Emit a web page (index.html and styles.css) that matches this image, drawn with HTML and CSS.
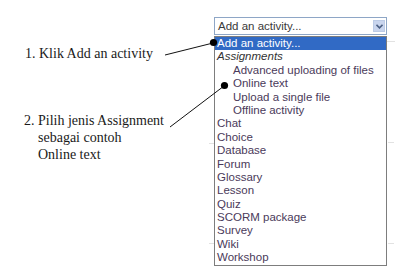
FILE: index.html
```html
<!DOCTYPE html>
<html lang="en">
<head>
    <meta charset="UTF-8">
    <title>Add an activity</title>
    <link rel="stylesheet" href="styles.css">
</head>
<body>
<div class="page">
    <div class="notes">
        <p class="note note-first">1. Klik Add an activity</p>
        <p class="note note-second">2. Pilih jenis Assignment<br><span class="indent">sebagai contoh</span><br><span class="indent">Online text</span></p>
    </div>

    <div class="activity">
        <div class="select-box">
            <span class="select-text">Add an activity...</span>
            <span class="arrow">
                <svg width="7" height="5" viewBox="0 0 7 5"><path d="M0.5 0.8 L3.5 3.8 L6.5 0.8" fill="none" stroke="#4d6185" stroke-width="1.6"/></svg>
            </span>
        </div>
        <ul class="options">
            <li class="selected">Add an activity...</li>
            <li class="group">Assignments</li>
            <li class="sub">Advanced uploading of files</li>
            <li class="sub">Online text</li>
            <li class="sub">Upload a single file</li>
            <li class="sub">Offline activity</li>
            <li>Chat</li>
            <li>Choice</li>
            <li>Database</li>
            <li>Forum</li>
            <li>Glossary</li>
            <li>Lesson</li>
            <li>Quiz</li>
            <li>SCORM package</li>
            <li>Survey</li>
            <li>Wiki</li>
            <li>Workshop</li>
        </ul>
    </div>
</div>

<!-- pointer lines from the notes to the list -->
<svg class="pointers" width="400" height="274" viewBox="0 0 400 274">
    <g stroke="#e2e2e2" stroke-width="1">
        <line x1="387" y1="41.5" x2="395" y2="41.5"/>
        <line x1="388" y1="142.5" x2="394" y2="142.5"/>
        <line x1="209" y1="143.5" x2="214" y2="143.5"/>
        <line x1="388" y1="243.5" x2="394" y2="243.5"/>
        <line x1="209" y1="243.5" x2="214" y2="243.5"/>
    </g>
    <g stroke="#111" stroke-width="1">
        <line x1="165" y1="55" x2="213" y2="43"/>
        <line x1="170" y1="127" x2="224" y2="86"/>
    </g>
    <circle cx="213.5" cy="42.5" r="3.6" fill="#000"/>
    <circle cx="224.5" cy="85.5" r="3.6" fill="#000"/>
</svg>
</body>
</html>
```

FILE: styles.css
```css
body {
    margin: 0;
    background: #fff;
    width: 400px;
    height: 274px;
    overflow: hidden;
    position: relative;
}

.page {
    display: flex;
    align-items: flex-start;
}

.notes {
    width: 190px;
    padding-left: 24px;
    font-family: "Liberation Serif", "Times New Roman", serif;
    font-size: 14px;
    color: #1a1a1a;
}
.note {
    margin: 0;
    line-height: 17px;
}
.note-first {
    margin-top: 45px;
    padding-left: 1px;
}
.note-second {
    margin-top: 50px;
}
.indent {
    padding-left: 14px;
}

.activity {
    width: 173px;
    margin-top: 17px;
    font-family: "Liberation Sans", Arial, sans-serif;
    font-size: 11.5px;
}

.select-box {
    height: 16px;
    border: 1px solid #8ea6c6;
    background: #fff;
    display: flex;
    align-items: center;
    justify-content: space-between;
    padding-left: 3px;
    padding-right: 1px;
    color: #3a3a3a;
}
.select-text {
    line-height: 14px;
}
.arrow {
    width: 12px;
    height: 12px;
    background: #c9d5ee;
    border: 1px solid #bccbe6;
    display: flex;
    align-items: center;
    justify-content: center;
    box-sizing: border-box;
}

.options {
    list-style: none;
    margin: 1px 0 0 0;
    padding: 0;
    border: 1px solid #7d7d7d;
    background: #fff;
}
.options li {
    height: 13.4px;
    line-height: 13.4px;
    padding-left: 2px;
    color: #4a3a5a;
    white-space: nowrap;
}
.options li.selected {
    background: #316ac5;
    color: #fff;
}
.options li.group {
    font-style: italic;
    color: #333;
}
.options li.sub {
    padding-left: 18px;
}

.pointers {
    position: absolute;
    left: 0;
    top: 0;
    pointer-events: none;
}
```
